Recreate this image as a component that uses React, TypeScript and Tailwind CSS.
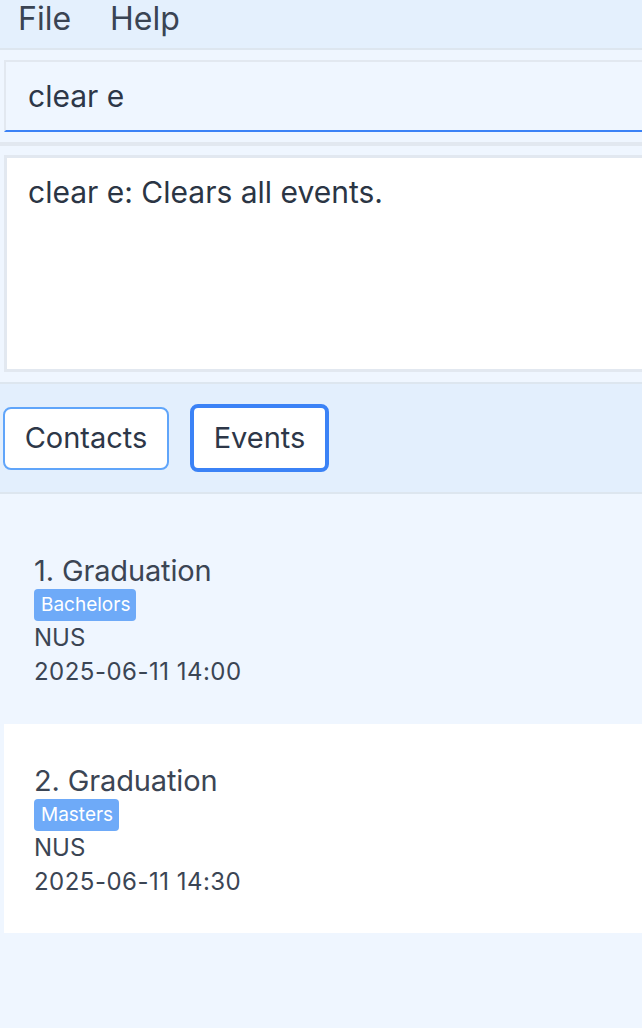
import React from "react";

const font = { fontFamily: "Inter, 'Noto Sans', sans-serif" };

function EventCard({ idx, title, tag, place, time, white }: { idx: number; title: string; tag: string; place: string; time: string; white?: boolean }) {
  return (
    <div className={`h-[209px] ml-[4px] pl-[30px] pt-[39px] flex flex-col ${white ? "bg-white" : ""}`}>
      <div className="text-[29px] leading-[35px] text-[#3b4554] tracking-[-0.005em]">{idx}. {title}</div>
      <div className="flex mt-[1px]">
        <span className="bg-[#6eaaf8] text-white text-[19px] leading-[32px] pl-[7px] pr-[6px] rounded-[4px]">{tag}</span>
      </div>
      <div className="text-[24px] leading-[34px] text-[#3b4554]">{place}</div>
      <div className="text-[24px] leading-[34px] text-[#3b4554] tracking-[0.02em]">{time}</div>
    </div>
  );
}

export default function App() {
  return (
    <div style={font} className="w-[642px] h-[1028px] overflow-hidden bg-[#eff6ff] flex flex-col text-[#2d3748]">
      <div className="h-[48px] bg-[#e4f0fd] flex items-start gap-[39px] pl-[18px] text-[32px] leading-[38px] text-[#3a4453] shrink-0">
        <span>File</span>
        <span>Help</span>
      </div>
      <div className="h-[2px] bg-[#dde6ef] shrink-0" />
      <div className="h-[92px] pt-[10px] pl-[4px] shrink-0">
        <div className="h-[72px] border-t-2 border-l-2 border-[#e2e8f0] border-b-2 border-b-[#3b82f6] flex items-center pl-[22px] text-[30px] text-[#2d3748]">
          clear e
        </div>
      </div>
      <div className="h-[4px] bg-[#e2e8f0] shrink-0" />
      <div className="h-[236px] pt-[9px] pl-[4px] shrink-0">
        <div className="h-[217px] border-[3px] border-r-0 border-[#e2e8f0] bg-white pl-[21px] pt-[14px] text-[30px] leading-[40px] text-[#2b3544]">
          clear e: Clears all events.
        </div>
      </div>
      <div className="h-[2px] bg-[#dde6ef] shrink-0" />
      <div className="h-[108px] bg-[#e3effd] flex items-center pl-[3px] gap-[21px] shrink-0">
        <button className="w-[166px] h-[63px] bg-white border-2 border-[#60a5fa] rounded-[8px] text-[29px] text-[#2d3748]">Contacts</button>
        <button className="w-[139px] h-[68px] bg-white border-4 border-[#3b82f6] rounded-[8px] text-[29px] text-[#2d3748]">Events</button>
      </div>
      <div className="h-[2px] bg-[#dde6ef] shrink-0" />
      <div className="pt-[20px] flex flex-col gap-[1px]">
        <EventCard idx={1} title="Graduation" tag="Bachelors" place="NUS" time="2025-06-11 14:00" />
        <EventCard idx={2} title="Graduation" tag="Masters" place="NUS" time="2025-06-11 14:30" white />
      </div>
    </div>
  );
}
